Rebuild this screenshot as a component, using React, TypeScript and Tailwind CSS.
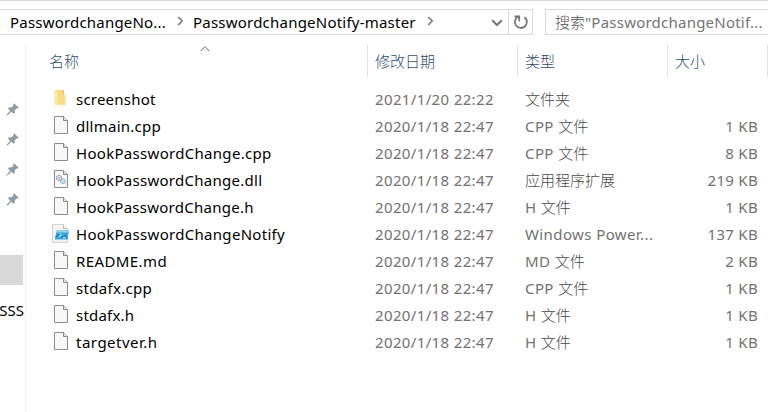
import type { ReactNode } from 'react';

type Kind = 'folder' | 'file' | 'dll' | 'script';

interface Entry {
  name: string;
  kind: Kind;
  date: string;
  prefix: string;
  type: string;
  size: string;
  tracking: string;
}

const entries: Entry[] = [
  { name: 'screenshot', kind: 'folder', date: '2021/1/20 22:22', prefix: '', type: '文件夹', size: '', tracking: 'tracking-[0.22px]' },
  { name: 'dllmain.cpp', kind: 'file', date: '2020/1/18 22:47', prefix: 'CPP ', type: '文件', size: '1 KB', tracking: 'tracking-[0.25px]' },
  { name: 'HookPasswordChange.cpp', kind: 'file', date: '2020/1/18 22:47', prefix: 'CPP ', type: '文件', size: '8 KB', tracking: 'tracking-[0.3px]' },
  { name: 'HookPasswordChange.dll', kind: 'dll', date: '2020/1/18 22:47', prefix: '', type: '应用程序扩展', size: '219 KB', tracking: 'tracking-[0.28px]' },
  { name: 'HookPasswordChange.h', kind: 'file', date: '2020/1/18 22:47', prefix: 'H ', type: '文件', size: '1 KB', tracking: 'tracking-[0.26px]' },
  { name: 'HookPasswordChangeNotify', kind: 'script', date: '2020/1/18 22:47', prefix: 'Windows Power...', type: '', size: '137 KB', tracking: 'tracking-[0.3px]' },
  { name: 'README.md', kind: 'file', date: '2020/1/18 22:47', prefix: 'MD ', type: '文件', size: '2 KB', tracking: 'tracking-[0.4px]' },
  { name: 'stdafx.cpp', kind: 'file', date: '2020/1/18 22:47', prefix: 'CPP ', type: '文件', size: '1 KB', tracking: 'tracking-[0.3px]' },
  { name: 'stdafx.h', kind: 'file', date: '2020/1/18 22:47', prefix: 'H ', type: '文件', size: '1 KB', tracking: 'tracking-[0.2px]' },
  { name: 'targetver.h', kind: 'file', date: '2020/1/18 22:47', prefix: 'H ', type: '文件', size: '1 KB', tracking: 'tracking-[0.5px]' },
];

function Page({ children }: { children?: ReactNode }) {
  return (
    <svg width="20" height="20" viewBox="0 0 20 20" className="-mt-px shrink-0">
      <path d="M4.500.5h9l4 4v13h-13z" fill="#f7f9f9" stroke="#8b8b8b" />
      <path d="M13.500.5v4h4" fill="#e4e4e4" stroke="#8b8b8b" />
      {children}
    </svg>
  );
}

function FileIcon({ kind }: { kind: Kind }) {
  if (kind === 'folder') {
    return (
      <svg width="20" height="20" viewBox="0 0 20 20" className="-mt-px shrink-0">
        <path d="M5 1h9v5h1.500v10H5z" fill="#fbdc84" />
        <path d="M12.500 1H14v5h-1.500z" fill="#efc964" />
        <path d="M4 1l3.500 2.500V17L4 15z" fill="#fdebb5" />
      </svg>
    );
  }
  if (kind === 'dll') {
    return (
      <Page>
        <circle cx="9" cy="8" r="2.500" fill="#eef1f3" stroke="#8a949b" strokeWidth="1.200" strokeDasharray="1.200 .5" />
        <circle cx="9" cy="8" r=".9" fill="#a2abb1" />
        <circle cx="13" cy="11.300" r="2.200" fill="#e9f3fa" stroke="#78aacf" strokeWidth="1.200" strokeDasharray="1.200 .5" />
        <circle cx="13" cy="11.300" r=".8" fill="#98c0df" />
      </Page>
    );
  }
  if (kind === 'script') {
    return (
      <svg width="20" height="20" viewBox="0 0 20 20" className="-mt-px shrink-0">
        <path d="M2.500.5h11l4 4v14h-15z" fill="#f4f4f4" stroke="#d2d2d2" />
        <path d="M13.500.5v4h4" fill="#fff" stroke="#bdbdbd" />
        <path d="M6.500 6.500h12.500l-1.500 9h-12.500z" fill="#3aa6d8" />
        <path d="M6.500 6.500h12.500l-.4 2h-12.500z" fill="#8ed2ee" />
        <path d="M5.500 13.500L9.500 10l3 3.500 2.500-2 2 2.500" fill="none" stroke="#1d80b8" strokeWidth="1.200" />
        <path d="M9.500 9.300l2 1.700-3 2M13 13.700h2.500" fill="none" stroke="#d8f1fb" />
      </svg>
    );
  }
  return <Page />;
}

function Pin() {
  return (
    <svg width="13" height="13" viewBox="0 0 13 13" className="-mt-px">
      <path d="M8.200.3L12.700 4.700 11.700 5.700 10.400 5.500 8.700 7.500 8.800 9.700 7.700 10.800 5.300 8.700 1.800 12.300 .8 12.500 .9 11.500 4.200 7.700 2 5.400 3.100 4.300 5.500 4.300 7.500 2.600 7.300 1.200z" fill="#929ca4" />
    </svg>
  );
}

function Chevron() {
  return (
    <svg width="7" height="10" viewBox="0 0 7 10" className="-mt-[2px] shrink-0">
      <path d="M1.200 1l4 4-4 4" fill="none" stroke="#7a7a7a" strokeWidth="1.600" />
    </svg>
  );
}

function Heading({ label }: { label: string }) {
  return (
    <div className="h-8 w-[150px] shrink-0 border-r border-[#e2e2e2] pl-[7px] leading-8 text-[#2f4d70]">
      {label}
    </div>
  );
}

export default function App() {
  return (
    <div className="flex h-[412px] w-[768px] flex-col overflow-hidden whitespace-nowrap bg-white font-['Noto_Sans','Noto_Sans_CJK_SC',sans-serif] text-[15px] leading-[27px] text-black">
      <header className="flex h-11 shrink-0 border-t border-[#d9d9d9] pt-2">
        <div className="flex h-[26px] w-[533px] items-center border-y border-r border-[#d9d9d9]">
          <span className="w-[167px] pl-[10px] tracking-[0.2px]">PasswordchangeNo...</span>
          <span className="flex w-[26px] pl-[10px]"><Chevron /></span>
          <span className="w-[234px] tracking-[0.22px]">PasswordchangeNotify-master</span>
          <Chevron />
          <svg width="12" height="8" viewBox="0 0 12 8" className="ml-[57px] mt-[2px]">
            <path d="M1.200 1.200L6 6l4.800-4.800" fill="none" stroke="#777" strokeWidth="2" />
          </svg>
          <div className="ml-auto flex h-full w-6 items-center justify-center border-l border-[#d9d9d9]">
            <svg width="16" height="16" viewBox="0 0 16 16">
              <path d="M5 2.700A6 6 0 1 0 11.500 3.200" fill="none" stroke="#777" strokeWidth="1.800" />
              <path d="M1.500 2.500h4.700v4.700" fill="none" stroke="#777" strokeWidth="1.800" />
            </svg>
          </div>
        </div>
        <div className="ml-3 h-[26px] w-[223px] border-y border-l border-[#d9d9d9] pl-[9px] leading-6 text-[#747474]">
          <span className="font-light text-[#505050]">搜索</span>
          <span className="tracking-[0.23px]">"PasswordchangeNotif...</span>
        </div>
      </header>

      <div className="flex min-h-0 flex-1">
        <nav className="w-[26px] shrink-0 overflow-hidden border-r border-[#f2f2f2] pt-[51px]">
          {[0, 1, 2, 3].map((i) => (
            <div key={i} className="flex h-[30px] items-center pl-[6px]"><Pin /></div>
          ))}
          <div className="mt-10 h-[30px] w-[23px] bg-[#d9d9d9]" />
          <div className="mt-[10px] flex h-[30px] w-[24px] items-center justify-end">SSS</div>
        </nav>

        <main className="relative min-w-0 flex-1">
          <svg width="10" height="6" viewBox="0 0 10 6" className="absolute left-[174px] top-[2px]">
            <path d="M.7 5L5 .7 9.300 5" fill="none" stroke="#666" />
          </svg>
          <div className="flex pt-px font-light">
            <div className="h-8 w-[342px] shrink-0 border-r border-[#e2e2e2] pl-[23px] leading-8 text-[#2f4d70]">名称</div>
            <Heading label="修改日期" />
            <Heading label="类型" />
            <div className="h-8 w-[100px] shrink-0 border-r border-[#e2e2e2] pl-[7px] leading-8 text-[#2f4d70]">大小</div>
          </div>
          <div className="pt-[9px]">
            {entries.map((e) => (
              <div key={e.name} className="flex h-[27px] items-center text-[#727272]">
                <div className="flex w-[349px] items-center gap-[6px] pl-6 text-black">
                  <FileIcon kind={e.kind} />
                  <span className={e.tracking}>{e.name}</span>
                </div>
                <span className="w-[150px] tracking-[0.36px]">{e.date}</span>
                <span className="w-[150px]">
                  {e.prefix && <span className="tracking-[0.4px]">{e.prefix}</span>}
                  <span className="font-light text-[#484848]">{e.type}</span>
                </span>
                <span className="w-[83px] text-right tracking-[0.3px]">{e.size}</span>
              </div>
            ))}
          </div>
        </main>
      </div>
    </div>
  );
}
